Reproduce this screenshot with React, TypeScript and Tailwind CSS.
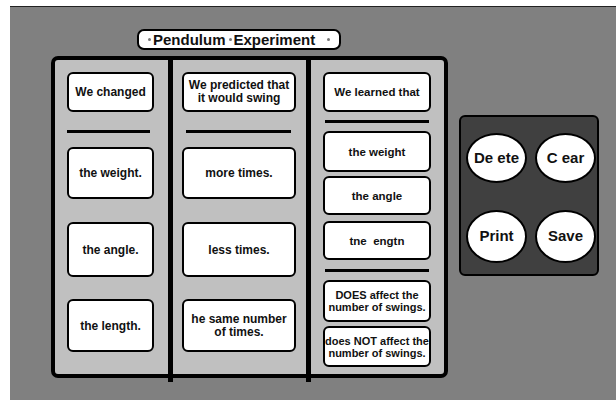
import React from 'react';

type CardProps = {
  w: string;
  h: string;
  mt?: string;
  size?: string;
  children: React.ReactNode;
};

const Card: React.FC<CardProps> = ({ w, h, mt = '', size = 'text-[12px] leading-[12px]', children }) => (
  <div
    className={`${w} ${h} ${mt} ${size} shrink-0 border-2 border-black rounded-[6px] bg-white flex items-center justify-center text-center font-bold text-[#111]`}
  >
    {children}
  </div>
);

const Rule: React.FC<{ w: string; mt: string; ml?: string }> = ({ w, mt, ml = '' }) => (
  <div className={`${w} ${mt} ${ml} h-[3px] bg-black shrink-0`} />
);

const Dot: React.FC<{ ml?: string }> = ({ ml = '' }) => (
  <span className={`${ml} block w-[3px] h-[3px] rounded-full bg-[#777] shrink-0`} />
);

const RoundButton: React.FC<{ h: string; children: React.ReactNode }> = ({ h, children }) => (
  <button className={`w-[61px] ${h} rounded-[50%] border-2 border-black bg-white flex items-center justify-center text-[15px] font-bold text-[#111]`}>
    {children}
  </button>
);

export default function App() {
  return (
    <div className="w-[616px] h-[400px] bg-white pt-[6px] pl-[10px] font-['Liberation_Sans',Arial,sans-serif]">
      <div className="h-full border-t border-[#222] bg-[#808080] flex items-start pl-[41px]">
        {/* sentence builder */}
        <div className="flex flex-col pt-[22px]">
          <div className="ml-[86px] w-[204px] h-[21px] rounded-[7px] border-2 border-black bg-white flex items-center pl-[9px] text-[15px] font-bold text-[#111] leading-none">
            <Dot />
            <span className="ml-[2px]">Pendulum</span>
            <Dot ml="ml-[3px]" />
            <span className="ml-[2px]">Experiment</span>
            <Dot ml="ml-[12px]" />
          </div>

          <div className="mt-[6px] w-[397px] h-[322px] border-4 border-black rounded-[7px] bg-[#c0c0c0] flex">
            <div className="w-[113px] pl-[12px] pt-[12px] flex flex-col">
              <Card w="w-[87px]" h="h-[40px]">We changed</Card>
              <Rule w="w-[83px]" mt="mt-[18px]" />
              <Card w="w-[87px]" h="h-[52px]" mt="mt-[14px]">the weight.</Card>
              <Card w="w-[87px]" h="h-[55px]" mt="mt-[23px]">the angle.</Card>
              <Card w="w-[87px]" h="h-[53px]" mt="mt-[22px]">the length.</Card>
            </div>
            <div className="w-[5px] bg-black self-stretch -mb-[8px]" />
            <div className="w-[133px] pl-[9px] pt-[12px] flex flex-col">
              <Card w="w-[114px]" h="h-[40px]" size="text-[12px] leading-[13px]">
                We predicted that
                <br />
                it would swing
              </Card>
              <Rule w="w-[105px]" mt="mt-[18px]" ml="ml-[4px]" />
              <Card w="w-[114px]" h="h-[52px]" mt="mt-[14px]">more times.</Card>
              <Card w="w-[114px]" h="h-[55px]" mt="mt-[23px]">less times.</Card>
              <Card w="w-[114px]" h="h-[53px]" mt="mt-[22px]" size="text-[12px] leading-[13px]">
                he same number
                <br />
                of times.
              </Card>
            </div>
            <div className="w-[5px] bg-black self-stretch -mb-[8px]" />
            <div className="flex-1 pl-[12px] pt-[12px] flex flex-col">
              <Card w="w-[108px]" h="h-[40px]" size="text-[11.5px] leading-[12px]">We learned that</Card>
              <Rule w="w-[104px]" mt="mt-[8px]" ml="ml-[2px]" />
              <Card w="w-[108px]" h="h-[41px]" mt="mt-[8px]" size="text-[11.5px] leading-[12px]">the weight</Card>
              <Card w="w-[108px]" h="h-[39px]" mt="mt-[4px]" size="text-[11.5px] leading-[12px]">the angle</Card>
              <Card w="w-[108px]" h="h-[39px]" mt="mt-[6px]" size="text-[11.5px] leading-[12px]">tne&nbsp;&nbsp;engtn</Card>
              <Rule w="w-[104px]" mt="mt-[9px]" ml="ml-[2px]" />
              <Card w="w-[108px]" h="h-[42px]" mt="mt-[8px]" size="text-[11px] leading-[12px]">
                DOES affect the
                <br />
                number of swings.
              </Card>
              <Card w="w-[108px]" h="h-[41px]" mt="mt-[4px]" size="text-[11px] leading-[12px]">
                does NOT affect the
                <br />
                number of swings.
              </Card>
            </div>
          </div>
        </div>

        {/* actions */}
        <div className="ml-[11px] mt-[108px] w-[140px] h-[161px] border-2 border-black rounded-[6px] bg-[#404040] grid grid-cols-[61px_61px] gap-x-[8px] gap-y-[27px] content-start pl-[5px] pt-[16px]">
          <RoundButton h="h-[50px]">De ete</RoundButton>
          <RoundButton h="h-[50px]">C ear</RoundButton>
          <RoundButton h="h-[53px]">Print</RoundButton>
          <RoundButton h="h-[53px]">Save</RoundButton>
        </div>
      </div>
    </div>
  );
}
